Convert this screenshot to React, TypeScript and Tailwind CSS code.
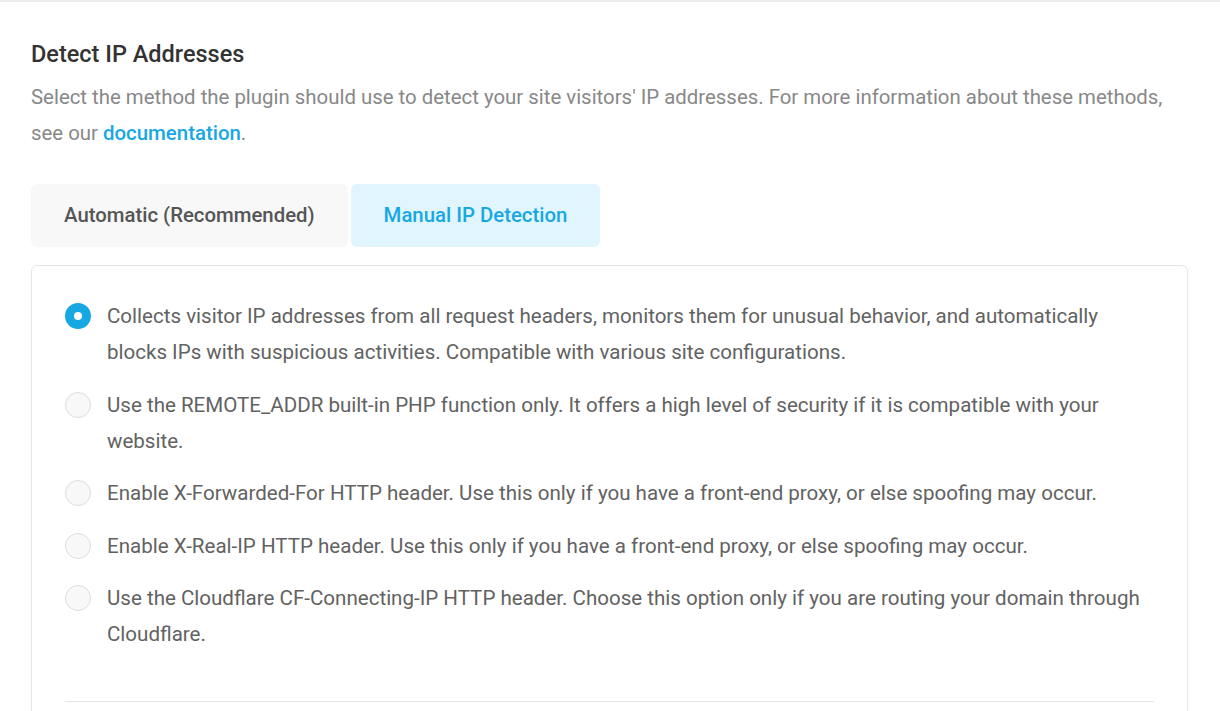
import React, { useState } from "react";

const options = [
  "Collects visitor IP addresses from all request headers, monitors them for unusual behavior, and automatically blocks IPs with suspicious activities. Compatible with various site configurations.",
  "Use the REMOTE_ADDR built-in PHP function only. It offers a high level of security if it is compatible with your website.",
  "Enable X-Forwarded-For HTTP header. Use this only if you have a front-end proxy, or else spoofing may occur.",
  "Enable X-Real-IP HTTP header. Use this only if you have a front-end proxy, or else spoofing may occur.",
  "Use the Cloudflare CF-Connecting-IP HTTP header. Choose this option only if you are routing your domain through Cloudflare.",
];

export default function App() {
  const [tab, setTab] = useState(1);
  const [selected, setSelected] = useState(0);

  return (
    <div
      className="min-h-[711px] bg-white border-t-2 border-[#ececec] overflow-hidden"
      style={{ fontFamily: "Roboto, 'Liberation Sans', sans-serif" }}
    >
      <div className="pl-[31px] pr-[32px] pt-[37px]">
        <h2 className="text-[23.5px] leading-[30px] font-medium text-[#333]">Detect IP Addresses</h2>
        <p className="mt-[10px] text-[20.4px] leading-[36px] text-[#888]">
          Select the method the plugin should use to detect your site visitors' IP addresses. For more information about these methods, see our{" "}
          <a href="#" className="text-[#17a8e3] font-medium">documentation</a>.
        </p>

        <div className="mt-[33px] flex gap-[3px]">
          {["Automatic (Recommended)", "Manual IP Detection"].map((label, i) => (
            <button
              key={label}
              onClick={() => setTab(i)}
              className={
                "h-[63px] px-[33px] rounded-[6px] text-[20.35px] font-medium " +
                (tab === i ? "bg-[#e1f5fe] text-[#17a8e3]" : "bg-[#f8f8f8] text-[#555]")
              }
            >
              {label}
            </button>
          ))}
        </div>

        <div className="mt-[18px] border border-[#e6e6e6] rounded-[6px] px-[33px] pt-[32px] pb-[40px]">
          <div className="flex flex-col gap-[16.5px]">
            {options.map((text, i) => (
              <label key={i} className="flex gap-[16px] cursor-pointer" onClick={() => setSelected(i)}>
                <span className="pt-[5px] shrink-0">
                  {selected === i ? (
                    <span className="block w-[26px] h-[26px] rounded-full border-[9px] border-[#17a8e3] bg-white" />
                  ) : (
                    <span className="block w-[26px] h-[26px] rounded-full border border-[#dddddd] bg-[#f8f8f8]" />
                  )}
                </span>
                <span className="text-[20.55px] leading-[36px] text-[#626262]">{text}</span>
              </label>
            ))}
          </div>
          <div className="mt-[49px] border-t border-[#e6e6e6]" />
        </div>
      </div>
    </div>
  );
}
